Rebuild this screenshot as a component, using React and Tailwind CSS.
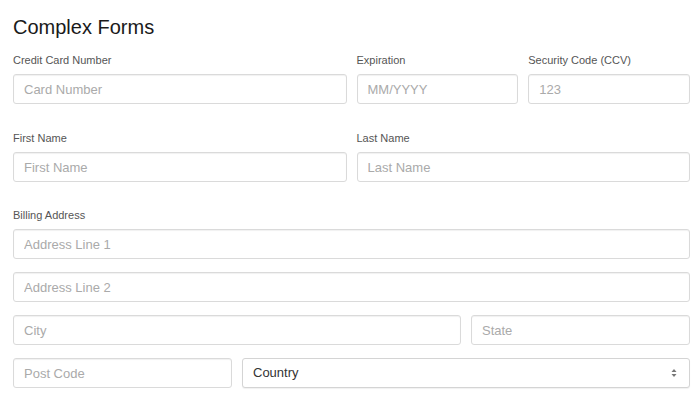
import React from 'react';

const Label = ({ children }) => (
  <label className="block text-[11px] leading-[14px] text-[#555] mb-[7px]">{children}</label>
);

const Field = ({ placeholder, className = '' }) => (
  <input
    type="text"
    placeholder={placeholder}
    className={`block w-full h-[30px] px-[10px] text-[13px] text-[#333] placeholder:text-[#aaa] bg-white border border-[#dadada] rounded-[3px] shadow-[inset_0_1px_1px_rgba(0,0,0,0.06)] outline-none ${className}`}
  />
);

const App = () => {
  return (
    <div className="min-h-screen w-[700px] h-[399px] overflow-hidden bg-white pl-[13px] pr-[10px] pt-[13px] font-['Liberation_Sans',Arial,sans-serif]">
      {/* Title */}
      <h1 className="text-[20px] leading-[28px] text-[#1a1a1a] mb-[12px]">Complex Forms</h1>

      {/* Card row */}
      <div className="grid grid-cols-12 gap-x-[10px] mb-[27px]">
        <div className="col-span-6">
          <Label>Credit Card Number</Label>
          <Field placeholder="Card Number" />
        </div>
        <div className="col-span-3">
          <Label>Expiration</Label>
          <Field placeholder="MM/YYYY" />
        </div>
        <div className="col-span-3">
          <Label>Security Code (CCV)</Label>
          <Field placeholder="123" />
        </div>
      </div>

      {/* Name row */}
      <div className="grid grid-cols-12 gap-x-[10px] mb-[26px]">
        <div className="col-span-6">
          <Label>First Name</Label>
          <Field placeholder="First Name" />
        </div>
        <div className="col-span-6">
          <Label>Last Name</Label>
          <Field placeholder="Last Name" />
        </div>
      </div>

      {/* Billing address */}
      <Label>Billing Address</Label>
      <div className="grid grid-cols-12 gap-x-[10px] gap-y-[13px]">
        <div className="col-span-12">
          <Field placeholder="Address Line 1" />
        </div>
        <div className="col-span-12">
          <Field placeholder="Address Line 2" />
        </div>
        <div className="col-span-8">
          <Field placeholder="City" />
        </div>
        <div className="col-span-4">
          <Field placeholder="State" />
        </div>
        <div className="col-span-4">
          <Field placeholder="Post Code" />
        </div>
        <div className="col-span-8">
          <div className="flex items-center justify-between w-full h-[30px] px-[10px] text-[13px] text-[#333] bg-white border border-[#d4d4d4] rounded-[3px] shadow-[0_1px_1px_rgba(0,0,0,0.06)]">
            <span>Country</span>
            <svg width="6" height="10" viewBox="0 0 6 10" className="mr-[2px]">
              <path d="M0.5 4 L3 1 L5.5 4 Z" fill="#777" />
              <path d="M0.5 6 L3 9 L5.5 6 Z" fill="#777" />
            </svg>
          </div>
        </div>
      </div>
    </div>
  );
};

export default App;
